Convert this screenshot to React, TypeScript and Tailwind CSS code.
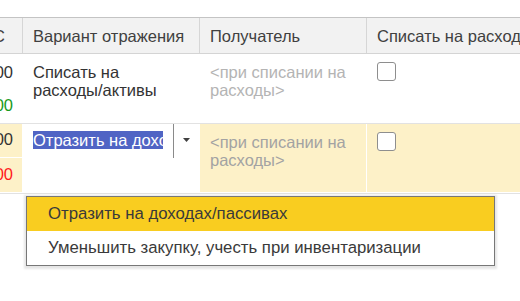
import React from 'react'

const font = { fontFamily: '"Liberation Sans", Arial, sans-serif' }

const Checkbox = () => (
  <div className="w-[19px] h-[19px] rounded-[3px] border border-[#8e8e8e] bg-white" />
)

const NumCell: React.FC<{ text: string; color: string; className?: string }> = ({ text, color, className }) => (
  <div className={`flex justify-end overflow-hidden whitespace-nowrap pr-[9px] ${className ?? ''}`} style={{ color }}>
    <span>{text}</span>
  </div>
)

export default function App() {
  return (
    <div className="relative w-[520px] h-[301px] overflow-hidden bg-white text-[16.5px] leading-[18px]" style={font}>
      <div className="h-[17px]" />

      {/* Header */}
      <div className="flex h-[37px] bg-[#f2f2f2] border-t border-b border-t-[#c4c4c4] border-b-[#d4d4d4] text-[#404040]">
        <div className="w-[23px] border-r border-[#d6d6d6] flex items-center justify-end overflow-hidden whitespace-nowrap pr-[17px]">
          НДС
        </div>
        <div className="w-[177px] border-r border-[#d6d6d6] flex items-center pl-[10px] whitespace-nowrap overflow-hidden">
          Вариант отражения
        </div>
        <div className="w-[167px] border-r border-[#d6d6d6] flex items-center pl-[10px] whitespace-nowrap overflow-hidden">
          Получатель
        </div>
        <div className="flex-1 flex items-center pl-[10px] whitespace-nowrap overflow-hidden">
          Списать на расходы
        </div>
      </div>

      {/* Row 1 */}
      <div className="flex h-[70px] border-b border-[#e2e2e2] text-[#333333]">
        <div className="w-[23px] border-r border-white flex flex-col">
          <NumCell text="1 000,00" color="#333333" className="h-[34px] pt-[9px]" />
          <NumCell text="1 000,00" color="#1a9a1a" className="h-[35px] pt-[8px]" />
        </div>
        <div className="w-[177px] border-r border-white pl-[10px] pt-[9px] pr-[8px]">
          Списать на <span className="whitespace-nowrap">расходы/активы</span>
        </div>
        <div className="w-[167px] border-r border-white pl-[10px] pt-[9px] pr-[8px] text-[#b4b4b4]">
          &lt;при списании на расходы&gt;
        </div>
        <div className="flex-1 pl-[10px] pt-[8px]">
          <Checkbox />
        </div>
      </div>

      {/* Row 2 (current) */}
      <div className="flex h-[70px] border-b border-[#e2e2e2] text-[#333333]">
        <div className="w-[23px] border-r border-white flex flex-col border-b border-b-white">
          <NumCell text="1 000,00" color="#333333" className="h-[34px] pt-[6px] bg-[#fdf1c8] border-b border-white" />
          <NumCell text="1 000,00" color="#ff1a1a" className="h-[34px] pt-[7px] bg-[#fdf1c8]" />
        </div>
        <div className="w-[177px] border-r border-white bg-white flex items-start">
          <div className="w-[130px] min-w-0 shrink-0 ml-[10px] mt-[7px] overflow-hidden whitespace-nowrap">
            <span className="bg-[#5064c4] text-white inline-block h-[18px] leading-[18px]">Отразить на доходах/пассивах</span>
          </div>
          <div className="w-px h-[34px] ml-[10px] bg-[#8a8a8a]" />
          <div className="flex-1 flex justify-center pt-[14px]">
            <svg width="7" height="4" viewBox="0 0 7 4">
              <path d="M0 0 L7 0 L3.5 4 Z" fill="#404040" />
            </svg>
          </div>
        </div>
        <div className="w-[167px] border-r border-white border-b border-b-white bg-[#fdf1c8] pl-[10px] pt-[9px] pr-[8px] text-[#a3a3a3]">
          &lt;при списании на расходы&gt;
        </div>
        <div className="flex-1 bg-[#fdf1c8] border-b border-b-white pl-[10px] pt-[8px]">
          <Checkbox />
        </div>
      </div>

      {/* Dropdown list */}
      <div className="absolute left-[26px] top-[196px] w-[469px] border border-[#777777] bg-white shadow-[0_1px_2px_2px_rgba(0,0,0,0.1)] text-[#3a3a3a] text-[16.75px]">
        <div className="h-[34px] bg-[#f9cd20] flex items-center pl-[21px] whitespace-nowrap">
          Отразить на доходах/пассивах
        </div>
        <div className="h-[34px] flex items-center pl-[21px] whitespace-nowrap">
          Уменьшить закупку, учесть при инвентаризации
        </div>
      </div>
    </div>
  )
}
